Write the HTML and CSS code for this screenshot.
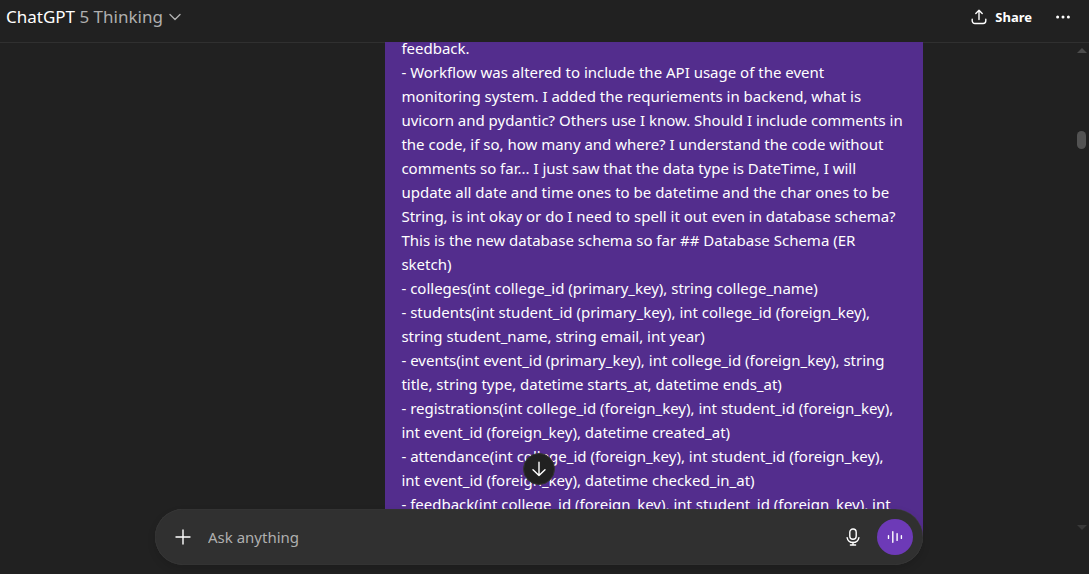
FILE: index.html
```html
<!DOCTYPE html>
<html lang="en">
<head>
<meta charset="utf-8">
<meta name="viewport" content="width=device-width, initial-scale=1">
<title>ChatGPT</title>
<link rel="stylesheet" href="styles.css">
</head>
<body>
<div class="app">
  <header class="topbar">
    <button class="model" type="button">
      <span>ChatGPT <span class="model-version">5 Thinking</span></span>
      <svg class="chevron" viewBox="0 0 12 12" aria-hidden="true"><path d="M1 3.5 6 8.5 11 3.5"/></svg>
    </button>
    <div class="actions">
      <button class="share" type="button">
        <svg class="icon" viewBox="0 0 16 16" aria-hidden="true"><path d="M8 10.5V1.2M4.8 4.4 8 1.2l3.2 3.2M1.2 10.3v1.5a2.7 2.7 0 0 0 2.7 2.7h8.2a2.7 2.7 0 0 0 2.7-2.7v-1.5"/></svg>
        Share
      </button>
      <button class="more" type="button" aria-label="More options">
        <svg class="dots" viewBox="0 0 16 16" aria-hidden="true"><circle cx="2.6" cy="8" r="1.5"/><circle cx="8" cy="8" r="1.5"/><circle cx="13.4" cy="8" r="1.5"/></svg>
      </button>
    </div>
  </header>

  <main class="thread">
    <div class="scroller">
      <div class="column">
        <div class="bubble">feedback.
- Workflow was altered to include the API usage of the event
monitoring system. I added the requriements in backend, what is
uvicorn and pydantic? Others use I know. Should I include comments in
the code, if so, how many and where? I understand the code without
comments so far... I just saw that the data type is DateTime, I will
update all date and time ones to be datetime and the char ones to be
String, is int okay or do I need to spell it out even in database schema?
This is the new database schema so far ## Database Schema (ER
sketch)
- colleges(int college_id (primary_key), string college_name)
- students(int student_id (primary_key), int college_id (foreign_key),
string student_name, string email, int year)
- events(int event_id (primary_key), int college_id (foreign_key), string
title, string type, datetime starts_at, datetime ends_at)
- registrations(int college_id (foreign_key), int student_id (foreign_key),
int event_id (foreign_key), datetime created_at)
- attendance(int college_id (foreign_key), int student_id (foreign_key),
int event_id (foreign_key), datetime checked_in_at)
- feedback(int college_id (foreign_key), int student_id (foreign_key), int</div>
      </div>
    </div>
    <div class="scrollbar" aria-hidden="true">
      <span class="arrow-up"></span>
      <span class="thumb"></span>
      <span class="arrow-down"></span>
    </div>
  </main>

  <footer class="dock">
    <form class="composer">
      <button class="jump" type="button" aria-label="Scroll to bottom">
        <svg class="icon" viewBox="0 0 16 16" aria-hidden="true"><path d="M8 1.2v13.3M2 8.7l6 5.9 6-5.9"/></svg>
      </button>
      <button class="tool" type="button" aria-label="Add files">
        <svg class="icon" viewBox="0 0 16 16" aria-hidden="true"><path d="M8 1v14M1 8h14"/></svg>
      </button>
      <input class="prompt" type="text" placeholder="Ask anything" aria-label="Ask anything">
      <button class="tool" type="button" aria-label="Dictate">
        <svg class="mic" viewBox="0 0 14 18" aria-hidden="true"><rect x="3.8" y="1" width="6.4" height="10.2" rx="3.2"/><path d="M1.1 9.6a6 6 0 0 0 11.8 0M7 14.3V17M4.4 17h5.2"/></svg>
      </button>
      <button class="voice" type="button" aria-label="Use voice mode">
        <svg class="wave" viewBox="0 0 16 16" aria-hidden="true"><path d="M1.5 6.6v2.8M5.8 2.8v10.4M10.1 4.6v6.8M14.4 6.6v2.8"/></svg>
      </button>
    </form>
  </footer>
</div>
</body>
</html>
```
FILE: styles.css
```css
* {
  box-sizing: border-box;
}

body {
  margin: 0;
  background: #212121;
  color: #fff;
  font-family: "Segoe UI", "Noto Sans", "Open Sans", sans-serif;
  font-size: 15px;
  line-height: 24px;
}

button,
input {
  margin: 0;
  padding: 0;
  border: 0;
  background: none;
  color: inherit;
  font: inherit;
}

button {
  display: flex;
  align-items: center;
  justify-content: center;
  cursor: pointer;
}

svg {
  flex: none;
  fill: none;
  stroke: currentColor;
  stroke-width: 1.4;
  stroke-linecap: round;
  stroke-linejoin: round;
}

.app {
  display: flex;
  flex-direction: column;
  height: 100vh;
}

.topbar {
  display: flex;
  flex: none;
  align-items: center;
  justify-content: space-between;
  height: 42px;
  padding: 0 18px 9px 6px;
  box-shadow: 0 1px #303030;
}

.model {
  gap: 6px;
  font-size: 17px;
}

.model-version {
  color: #afafaf;
}

.chevron {
  width: 12px;
  height: 12px;
  color: #afafaf;
}

.icon,
.dots {
  width: 16px;
  height: 16px;
}

.dots {
  fill: currentColor;
  stroke: none;
}

.actions {
  display: flex;
  gap: 23px;
}

.share {
  gap: 8px;
  font-size: 13px;
  font-weight: 700;
}

.thread {
  position: relative;
  display: flex;
  flex: 1;
  min-height: 0;
}

.scroller {
  flex: 1;
  overflow: hidden;
}

.column {
  display: flex;
  justify-content: flex-end;
  max-width: 768px;
  margin: -6px auto 0;
}

.bubble {
  width: 70%;
  padding: 0 16px 40px;
  background: #532d8d;
  white-space: pre;
}

.scrollbar {
  display: flex;
  flex-direction: column;
  align-items: center;
  width: 11px;
  padding: 6px 4px 7px 0;
}

.arrow-up,
.arrow-down {
  border: 5px solid transparent;
}

.arrow-up {
  border-top: 0;
  border-bottom-color: #4c4c4c;
}

.arrow-down {
  margin-top: auto;
  border-bottom: 0;
  border-top-color: #393939;
}

.thumb {
  width: 9px;
  height: 18px;
  margin-top: 78px;
  border-radius: 5px;
  background: #535353;
}

.dock {
  position: relative;
  flex: none;
  margin-top: -28px;
  padding: 0 11px 9px 0;
}

.composer {
  position: relative;
  display: flex;
  align-items: center;
  max-width: 768px;
  height: 56px;
  margin: 0 auto;
  padding: 0 10px;
  border-radius: 28px;
  background: #303030;
  box-shadow: inset 0 0 1px #555, 0 4px 8px #0000001f;
}

.tool {
  width: 36px;
  height: 36px;
}

.prompt {
  flex: 1;
  min-width: 0;
  padding: 0 7px;
  outline: 0;
}

.prompt::placeholder {
  color: #afafaf;
  opacity: 1;
}

.mic {
  width: 14px;
  height: 18px;
}

.voice {
  width: 36px;
  height: 36px;
  margin-left: 6px;
  border-radius: 50%;
  background: #6d3ab7;
}

.wave {
  width: 16px;
  height: 16px;
}

.jump {
  position: absolute;
  bottom: 100%;
  left: 50%;
  width: 32px;
  height: 32px;
  margin: 0 0 24px -16px;
  border: 1px solid #353535;
  border-radius: 50%;
  background: #212121;
}
```
